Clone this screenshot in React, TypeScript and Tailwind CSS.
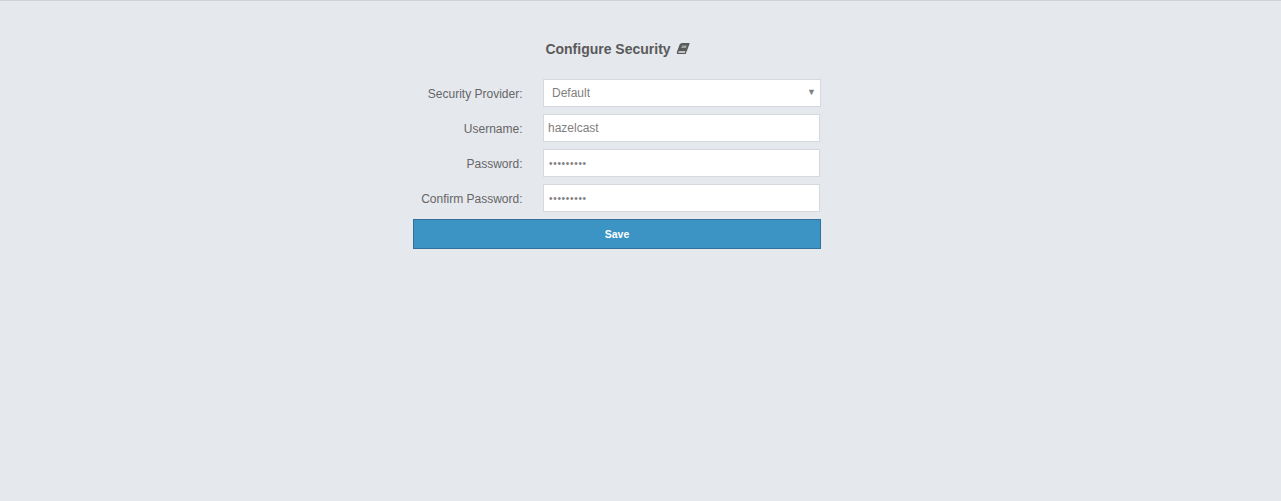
import { FaBook } from "react-icons/fa";

function Row({ label, children }: { label: string; children: React.ReactNode }) {
  return (
    <div className="flex items-center h-7">
      <label className="w-[109.5px] text-right text-[12px] text-[#666] pt-0.5">{label}</label>
      <div className="ml-[20.5px] flex-1 h-full">{children}</div>
    </div>
  );
}

const inputCls =
  "block w-[277px] h-7 bg-white border border-[#d5d9de] pl-[4px] text-[12px] text-[#808080] outline-none";
const passwordCls =
  "block w-[277px] h-7 bg-white border border-[#d5d9de] pl-[5px] text-[10px] tracking-[0.7px] text-[#808080] outline-none";

export default function App() {
  return (
    <div className="w-[1281px] h-[501px] bg-[#e5e8ed] border-t border-[#d0d4d8] font-['Liberation_Sans',Arial,sans-serif] flex flex-col items-center pt-[38px]">
      <div className="w-[408px] ml-[-47px] flex flex-col">
        <h1 className="h-[19px] flex items-center justify-center text-[14px] font-bold text-[#5a5a5a] leading-none">
          Configure Security
          <FaBook className="ml-[6px] w-[12px] h-[11px] -skew-x-[20deg] text-[#5a5a5a]" />
        </h1>
        <div className="mt-[21px] flex flex-col gap-[7px]">
          <Row label="Security Provider:">
            <div className="relative w-[278px] h-7 bg-white border border-[#d5d9de] pl-[8px] flex items-center text-[12px] text-[#808080]">
              Default
              <span className="absolute right-[4px] top-[8px] text-[9px] leading-none text-[#808080]">▼</span>
            </div>
          </Row>
          <Row label="Username:">
            <input className={inputCls} defaultValue="hazelcast" />
          </Row>
          <Row label="Password:">
            <input className={passwordCls} type="password" defaultValue="hazelcast" />
          </Row>
          <Row label="Confirm Password:">
            <input className={passwordCls} type="password" defaultValue="hazelcast" />
          </Row>
          <button className="h-[30px] w-[408px] bg-[#3c94c4] border border-[#2f7198] text-white text-[10.5px] font-bold pt-px">
            Save
          </button>
        </div>
      </div>
    </div>
  );
}
